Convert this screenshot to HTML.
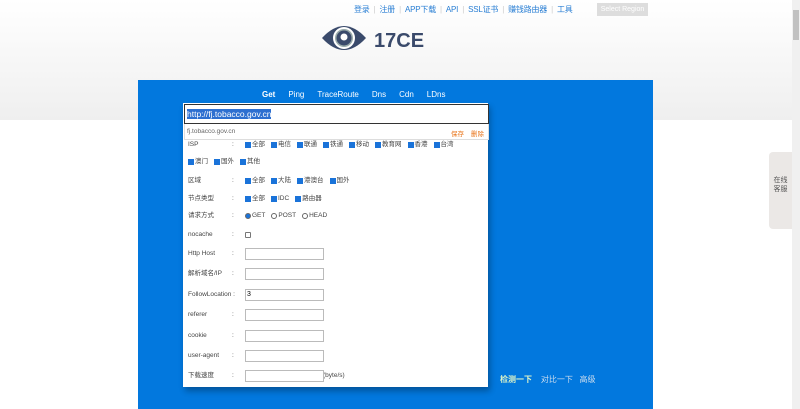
<!DOCTYPE html>
<html><head><meta charset="utf-8"><style>
*{margin:0;padding:0;box-sizing:border-box}
body{width:800px;height:409px;overflow:hidden;position:relative;font-family:"Liberation Sans","Noto Sans CJK SC",sans-serif;background:#fff}
.bg{position:absolute;left:0;top:0;width:792px;height:120px;background:linear-gradient(#fff,#efefef)}
.top{position:absolute;top:4px;left:352px;font-size:8px;color:#2a7fd4;white-space:nowrap;letter-spacing:-0.2px}
.top span{margin:0 2px}
.top i{color:#ccc;font-style:normal;margin:0 2px}
.sel{position:absolute;left:597px;top:3px;width:51px;height:13px;background:#ddd;color:#fff;font-size:7px;text-align:center;line-height:13px}
.logo{position:absolute;left:321px;top:20px}
.logot{position:absolute;left:374px;top:30px;font-size:20px;font-weight:bold;color:#3a4a6b}
.panel{position:absolute;left:138px;top:80px;width:515px;height:329px;background:#0278de}
.tabs{position:absolute;left:262px;top:90px;font-size:8px;color:#fff}
.tabs span{margin-right:13px}
.form{position:absolute;left:183px;top:103px;width:305px;height:284px;background:#fff;box-shadow:2px 4px 6px rgba(0,0,0,.3)}
.url{position:absolute;left:184px;top:104px;width:305px;height:20px;border:1px solid #333;background:#fff}
.url span{position:absolute;left:2px;top:4px;font-size:8.5px;line-height:10px;background:#2d6fd0;color:#fff}
.sug{position:absolute;left:184px;top:124px;width:305px;height:16px;border:1px solid #ddd;border-top:0;background:#fff;font-size:6.5px;color:#666}
.row{position:absolute;left:188px;height:10px;line-height:10px;font-size:6.5px;color:#444;white-space:nowrap;display:flex;align-items:center}
.row .l{width:44px}
.row .k{width:13px}
.c{display:inline-block;width:6px;height:6px;background:#1a73d9;margin-right:1px}
.cb{display:inline-block;width:6px;height:6px;border:1px solid #777;border-radius:1px}
.r{display:inline-block;width:6px;height:6px;border:1px solid #666;border-radius:50%;margin-right:1px}
.g{margin-right:6px;display:inline-flex;align-items:center}
.in{position:absolute;left:245px;width:79px;height:12px;border:1px solid #bbb;font-size:7px;padding-left:1px;line-height:10px}
.btns{position:absolute;top:374px;left:500px;font-size:8px;color:#cde}
.sb{position:absolute;right:0;top:0;width:8px;height:409px;background:#f0f0f0}
.sbt{position:absolute;right:1px;top:10px;width:6px;height:30px;background:#c1c1c1}
.fb{position:absolute;left:769px;top:152px;width:23px;height:77px;background:#ebe8e6;border-radius:4px 0 0 4px;font-size:7px;color:#555;text-align:center;padding-top:24px;line-height:9px}
</style></head><body>
<div class="bg"></div>
<div class="top"><span>登录</span><i>|</i><span>注册</span><i>|</i><span>APP下载</span><i>|</i><span>API</span><i>|</i><span>SSL证书</span><i>|</i><span>赚钱路由器</span><i>|</i><span>工具</span></div>
<div class="sel">Select Region</div>
<svg class="logo" width="46" height="36" viewBox="0 0 46 36"><path d="M1 18 Q23 -6 45 18 Q23 42 1 18Z" fill="#3a4a6b"/><circle cx="23" cy="18" r="11" fill="#fff"/><circle cx="23" cy="18" r="9" fill="#9aa"/><circle cx="23" cy="18" r="7.5" fill="#3a4a6b"/><circle cx="23" cy="17" r="3.5" fill="#fff"/></svg>
<div class="logot">17CE</div>
<div class="panel"></div>
<div class="tabs"><span style="font-weight:bold">Get</span><span>Ping</span><span>TraceRoute</span><span>Dns</span><span>Cdn</span><span>LDns</span></div>
<div class="form"></div>
<div class="url"><span>http://fj.tobacco.gov.cn</span></div>
<div class="sug"><span style="position:absolute;left:2px;top:4px">fj.tobacco.gov.cn</span><span style="position:absolute;left:266px;top:4px;color:#e8741a">保存</span><span style="position:absolute;left:286px;top:4px;color:#e8741a">删除</span></div>
<div class="row" style="top:140px"><span class="l">ISP</span><span class="k">:</span><span class="g"><b class="c"></b>全部</span><span class="g"><b class="c"></b>电信</span><span class="g"><b class="c"></b>联通</span><span class="g"><b class="c"></b>铁通</span><span class="g"><b class="c"></b>移动</span><span class="g"><b class="c"></b>教育网</span><span class="g"><b class="c"></b>香港</span><span class="g"><b class="c"></b>台湾</span></div>
<div class="row" style="top:157px"><span class="g"><b class="c"></b>澳门</span><span class="g"><b class="c"></b>国外</span><span class="g"><b class="c"></b>其他</span></div>
<div class="row" style="top:176px"><span class="l">区域</span><span class="k">:</span><span class="g"><b class="c"></b>全部</span><span class="g"><b class="c"></b>大陆</span><span class="g"><b class="c"></b>港澳台</span><span class="g"><b class="c"></b>国外</span></div>
<div class="row" style="top:194px"><span class="l">节点类型</span><span class="k">:</span><span class="g"><b class="c"></b>全部</span><span class="g"><b class="c"></b>IDC</span><span class="g"><b class="c"></b>路由器</span></div>
<div class="row" style="top:211px"><span class="l">请求方式</span><span class="k">:</span><span class="g"><b class="r" style="background:#1a73d9"></b>GET</span><span class="g"><b class="r"></b>POST</span><span class="g"><b class="r"></b>HEAD</span></div>
<div class="row" style="top:230px"><span class="l">nocache</span><span class="k">:</span><b class="cb"></b></div>
<div class="row" style="top:249px"><span class="l">Http Host</span><span class="k">:</span></div><div class="in" style="top:248px"></div>
<div class="row" style="top:269px"><span class="l">解析域名/IP</span><span class="k">:</span></div><div class="in" style="top:268px"></div>
<div class="row" style="top:290px"><span class="l" style="width:57px">FollowLocation :</span></div><div class="in" style="top:289px">3</div>
<div class="row" style="top:310px"><span class="l">referer</span><span class="k">:</span></div><div class="in" style="top:309px"></div>
<div class="row" style="top:331px"><span class="l">cookie</span><span class="k">:</span></div><div class="in" style="top:330px"></div>
<div class="row" style="top:351px"><span class="l">user-agent</span><span class="k">:</span></div><div class="in" style="top:350px"></div>
<div class="row" style="top:371px"><span class="l">下载速度</span><span class="k">:</span><span style="margin-left:78px">(byte/s)</span></div><div class="in" style="top:370px"></div>
<div class="btns"><b style="color:#dff5c8">检测一下</b> &nbsp;&nbsp; 对比一下 &nbsp; 高级</div>
<div class="fb">在线<br>客服</div>
<div class="sb"><div class="sbt"></div></div>
</body></html>
